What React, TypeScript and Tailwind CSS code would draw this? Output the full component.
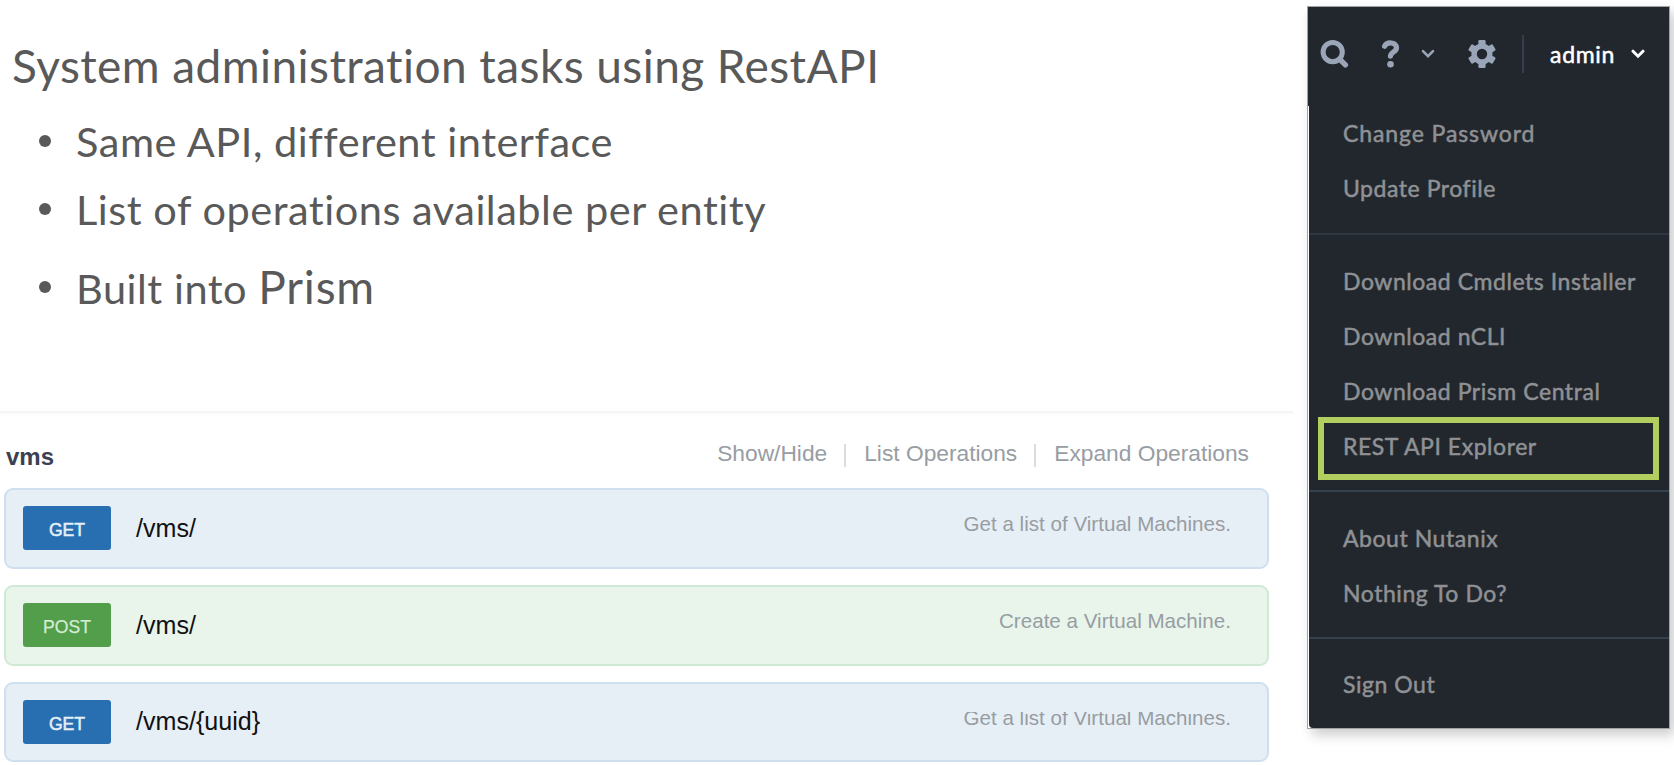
type Operation = { method: "GET" | "POST"; path: string; summary: string; clipped?: boolean };

const operations: Operation[] = [
  { method: "GET", path: "/vms/", summary: "Get a list of Virtual Machines." },
  { method: "POST", path: "/vms/", summary: "Create a Virtual Machine." },
  { method: "GET", path: "/vms/{uuid}", summary: "Get a list of Virtual Machines.", clipped: true },
];

function Bullet() {
  return <span className="mr-[25px] ml-[39px] size-[12px] shrink-0 rounded-full bg-[#595959]" />;
}

function Slide() {
  return (
    <section className="flex h-[411px] flex-col font-['Lato',sans-serif] text-[#595959]">
      <h1 className="mt-[38px] ml-[12px] h-[56px] text-[46px] leading-[56px] tracking-[0.43px] whitespace-nowrap">
        System administration tasks using RestAPI
      </h1>
      <ul className="mt-[3px] flex flex-col text-[41.5px] leading-[50px] tracking-[0.52px] whitespace-nowrap">
        <li className="mt-[19px] flex h-[50px] items-center"><Bullet />Same API, different interface</li>
        <li className="mt-[18px] flex h-[50px] items-center"><Bullet />List of operations available per entity</li>
        <li className="mt-[28px] flex h-[50px] items-center">
          <Bullet />
          <span>Built into <span className="text-[46px] tracking-[0.8px]">Prism</span></span>
        </li>
      </ul>
    </section>
  );
}

function OperationRow({ op }: { op: Operation }) {
  const get = op.method === "GET";
  return (
    <li
      className={`flex items-center rounded-[9px] border-2 pr-[36px] pb-px pl-[17px] ${op.clipped ? "h-[80px]" : "h-[81px]"} ${
        get ? "border-[#cfdfee] bg-[#e7eff6]" : "border-[#cfe9d5] bg-[#e9f5eb]"
      }`}
    >
      <span
        className={`flex h-[44px] w-[88px] items-center justify-center rounded-[3px] pt-[5px] text-[17.6px] ${
          get
            ? "bg-[#286fb2] text-[#e6eef6] [-webkit-text-stroke:0.5px_#e6eef6]"
            : "bg-[#529e4a] text-[#d5ecd5] [-webkit-text-stroke:0.25px_#d5ecd5]"
        }`}
      >
        {op.method}
      </span>
      <span className="mb-px ml-[25px] text-[25.1px] leading-[30px] text-[#111111]">{op.path}</span>
      <span className="relative mb-[8px] ml-auto text-[20.6px] leading-[26px] text-[#979da3]">
        {op.summary}
        {op.clipped && <span className="absolute inset-x-0 top-0 h-[7px] bg-[#e7eff6]" />}
      </span>
    </li>
  );
}

function ApiPanel() {
  return (
    <section className="w-[1293px] border-t-2 border-[#f5f5f5] font-['Liberation_Sans',sans-serif] shadow-[inset_0_2px_0_#fcfcfc]">
      <header className="flex h-[75px] items-center pr-[44px] pl-[6px]">
        <h2 className="mt-[12px] text-[24px] leading-[30px] font-bold text-[#3b4151]">vms</h2>
        <nav className="mt-[4px] ml-auto flex items-center text-[22.75px] leading-[30px] text-[#979da3]">
          <span>Show/Hide</span>
          <span className="mt-[6px] mr-[18px] ml-[17px] h-[23px] w-[2px] bg-[#dddddd]" />
          <span>List Operations</span>
          <span className="mt-[6px] mr-[18px] ml-[17px] h-[23px] w-[2px] bg-[#dddddd]" />
          <span>Expand Operations</span>
        </nav>
      </header>
      <ul className="flex w-[1269px] flex-col gap-[16px] pl-[4px]">
        {operations.map((op, i) => (
          <OperationRow key={i} op={op} />
        ))}
      </ul>
    </section>
  );
}

function GearIcon() {
  return (
    <svg width="28" height="28" viewBox="-14 -14 28 28" fill="#9aa6b8" className="ml-[33px] shrink-0">
      <circle r="10.6" />
      {[0, 60, 120].map((angle) => (
        <rect key={angle} x="-3.6" y="-14" width="7.2" height="28" rx="1.2" transform={`rotate(${angle})`} />
      ))}
      <circle r="5.2" fill="#22272e" />
    </svg>
  );
}

function Toolbar() {
  return (
    <div className="flex h-[99px] items-center pb-[6px] pl-[12px]">
      <svg width="30" height="30" viewBox="0 0 30 30" fill="none" stroke="#9aa6b8" className="shrink-0">
        <circle cx="12.7" cy="13.1" r="9.6" strokeWidth="5" />
        <path d="M20.3 20.8 L25.4 25.9" strokeWidth="5.4" strokeLinecap="round" />
      </svg>
      <svg width="20" height="30" viewBox="0 0 20 30" fill="none" stroke="#9aa6b8" className="ml-[31px] shrink-0">
        <path d="M3.6 7.2 C5.5 2.9 15.4 2.4 15.5 8.8 C15.6 13.2 9.7 12.6 9.5 17.2" strokeWidth="5.2" strokeLinecap="round" />
        <circle cx="9.5" cy="25.2" r="3.3" fill="#9aa6b8" stroke="none" />
      </svg>
      <svg width="14" height="10" viewBox="0 0 14 10" fill="none" stroke="#9aa6b8" className="ml-[20px] shrink-0">
        <path d="M2 2.2 L7 7.2 L12 2.2" strokeWidth="2.6" strokeLinecap="round" />
      </svg>
      <GearIcon />
      <span className="ml-[26px] h-[38px] w-[2px] shrink-0 bg-[#343f4b]" />
      <span className="ml-[26px] text-[23px] leading-[30px] tracking-[0.7px] text-white [-webkit-text-stroke:0.5px_white]">
        admin
      </span>
      <svg width="14" height="10" viewBox="0 0 14 10" fill="none" stroke="#ffffff" className="mr-[24px] ml-auto shrink-0">
        <path d="M2 2.2 L7 7.2 L12 2.2" strokeWidth="3" strokeLinecap="round" />
      </svg>
    </div>
  );
}

const groups = [
  ["Change Password", "Update Profile"],
  ["Download Cmdlets Installer", "Download nCLI", "Download Prism Central", "REST API Explorer"],
  ["About Nutanix", "Nothing To Do?"],
  ["Sign Out"],
];

function AdminMenu() {
  return (
    <aside className="mt-[6px] ml-[13px] flex h-[723px] w-[363px] shrink-0 flex-col border border-[#a3a3a3] bg-white font-['Lato',sans-serif] shadow-[5px_6px_12px_rgba(0,0,0,0.2)]">
      <div className="bg-[#22272e]">
        <Toolbar />
      </div>
      <div className="ml-px flex grow flex-col rounded-bl-[4px] bg-[#22272e]">
        {groups.map((items, g) => (
          <ul
            key={g}
            className={
              g === 0
                ? "h-[127px]"
                : g === 1
                  ? "h-[257px] border-t-2 border-[#2f3841] pt-[19px]"
                  : g === 2
                    ? "h-[147px] border-t-2 border-[#35414d] pt-[19px]"
                    : "border-t-2 border-[#35414d] pt-[18px]"
            }
          >
            {items.map((item) => (
              <li
                key={item}
                className={`relative flex h-[55px] items-center pl-[34px] text-[23px] whitespace-nowrap text-[#8f9194] [-webkit-text-stroke:0.5px_#8f9194] ${
                  item === "Change Password" ? "tracking-[0.9px]" : "tracking-[0.55px]"
                }`}
              >
                {item}
                {item === "REST API Explorer" && (
                  <span className="absolute top-[-2px] left-[9px] h-[63px] w-[341px] border-[6px] border-[#b1ce5f]" />
                )}
              </li>
            ))}
          </ul>
        ))}
      </div>
    </aside>
  );
}

export default function App() {
  return (
    <main className="flex h-[765px] w-[1674px] overflow-hidden bg-white">
      <div className="w-[1294px] shrink-0">
        <Slide />
        <ApiPanel />
      </div>
      <AdminMenu />
    </main>
  );
}
